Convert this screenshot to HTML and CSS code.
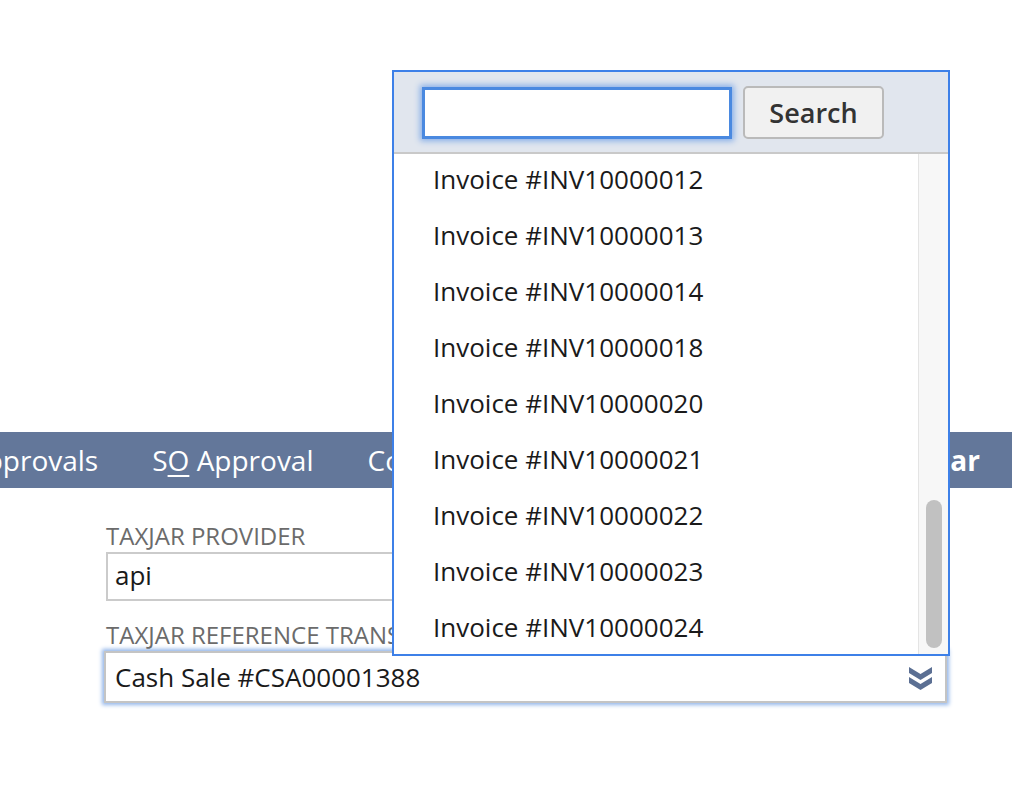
FILE: index.html
```html
<!DOCTYPE html>
<html>
<head>
<meta charset="utf-8">
<link rel="stylesheet" href="styles.css">
</head>
<body>
<div class="page">
  <div class="spacer"></div>
  <nav class="navbar">
    <div class="nav-items">
      <span class="nav-item">Approvals</span>
      <span class="nav-item">S<u>O</u> Approval</span>
      <span class="nav-item">Communication</span>
      <span class="nav-item">System Information</span>
    </div>
    <span class="nav-item active">TaxJar</span>
  </nav>
  <div class="form">
    <div class="label">TAXJAR PROVIDER</div>
    <div class="input">api</div>
    <div class="label label2">TAXJAR REFERENCE TRANSACTION</div>
    <div class="select">
      <span>Cash Sale #CSA00001388</span>
      <svg class="chev" width="23" height="24" viewBox="0 0 23 24">
        <path d="M0 1 L11.5 8 L23 1 L23 7 L11.5 14 L0 7 Z" fill="#5b6f93"/>
        <path d="M0 11 L11.5 18 L23 11 L23 17 L11.5 24 L0 17 Z" fill="#5b6f93"/>
      </svg>
    </div>
  </div>

  <div class="popup">
    <div class="popup-head">
      <div class="search-box"></div>
      <button class="search-btn">Search</button>
    </div>
    <div class="popup-body">
      <div class="list">
        <div class="row">Invoice #INV10000012</div>
        <div class="row">Invoice #INV10000013</div>
        <div class="row">Invoice #INV10000014</div>
        <div class="row">Invoice #INV10000018</div>
        <div class="row">Invoice #INV10000020</div>
        <div class="row">Invoice #INV10000021</div>
        <div class="row">Invoice #INV10000022</div>
        <div class="row">Invoice #INV10000023</div>
        <div class="row">Invoice #INV10000024</div>
      </div>
      <div class="track"><div class="thumb"></div></div>
    </div>
  </div>
</div>
</body>
</html>
```

FILE: styles.css
```css
* { box-sizing: border-box; }
html, body { margin: 0; padding: 0; background: #fff; }
body {
  font-family: "Open Sans", "Noto Sans", sans-serif;
  width: 1012px;
  height: 810px;
  overflow: hidden;
}
.page { position: relative; width: 1012px; height: 810px; }
.spacer { height: 432px; }
.navbar {
  height: 56px;
  background: #63779a;
  color: #fff;
  display: flex;
  align-items: center;
  font-size: 28px;
  white-space: nowrap;
  overflow: hidden;
  padding-right: 32px;
}
.nav-items {
  display: flex;
  gap: 54px;
  margin-left: -32px;
  flex: 1;
  overflow: hidden;
}
.nav-item u { text-underline-offset: 4px; text-decoration-thickness: 2px; }
.active { font-weight: 700; }
.form { padding: 36px 0 0 106px; }
.label {
  font-size: 24px;
  line-height: 24px;
  color: #6b6b6b;
  white-space: nowrap;
}
.label2 { margin-top: 22px; }
.input {
  margin-top: 4px;
  width: 841px;
  height: 49px;
  border: 2px solid #cbcbcb;
  font-size: 26px;
  line-height: 43px;
  padding-left: 7px;
  color: #1a1a1a;
}
.select {
  margin-top: 4px;
  margin-left: -2px;
  width: 843px;
  height: 52px;
  border: 2px solid #c4c4c4;
  box-shadow: 0 0 4px 2px #93b6ea;
  display: flex;
  align-items: center;
  justify-content: space-between;
  padding: 0 13px 0 9px;
  font-size: 26px;
  color: #1a1a1a;
}
.chev { display: block; margin-top: 2px; }
.popup {
  position: absolute;
  left: 392px;
  top: 70px;
  width: 558px;
  height: 586px;
  border: 2px solid #3d80e8;
  background: #fff;
  display: flex;
  flex-direction: column;
}
.popup-head {
  height: 82px;
  background: #e1e6ee;
  border-bottom: 2px solid #c9c9c9;
  display: flex;
  align-items: center;
  padding-left: 28px;
  gap: 11px;
  flex-shrink: 0;
}
.search-box {
  width: 310px;
  height: 52px;
  background: #fff;
  border: 3px solid #4a89e0;
  box-shadow: 0 0 6px 2px #86aee8;
  margin-top: 2px;
}
.search-btn {
  width: 141px;
  height: 53px;
  background: #f1f1f1;
  border: 2px solid #bababa;
  border-radius: 5px;
  font-family: "Open Sans", "Noto Sans", sans-serif;
  font-size: 27px;
  font-weight: 600;
  color: #333;
  padding: 0;
}
.popup-body {
  flex: 1;
  display: flex;
  overflow: hidden;
}
.list { flex: 1; overflow: hidden; }
.row {
  height: 56px;
  line-height: 50px;
  padding-left: 39px;
  font-size: 26px;
  color: #1a1a1a;
  white-space: nowrap;
}
.track {
  width: 30px;
  background: #f7f7f7;
  border-left: 1px solid #e4e4e4;
  position: relative;
}
.thumb {
  position: absolute;
  left: 7px;
  top: 346px;
  width: 16px;
  height: 148px;
  border-radius: 8px;
  background: #c1c1c1;
}
```
